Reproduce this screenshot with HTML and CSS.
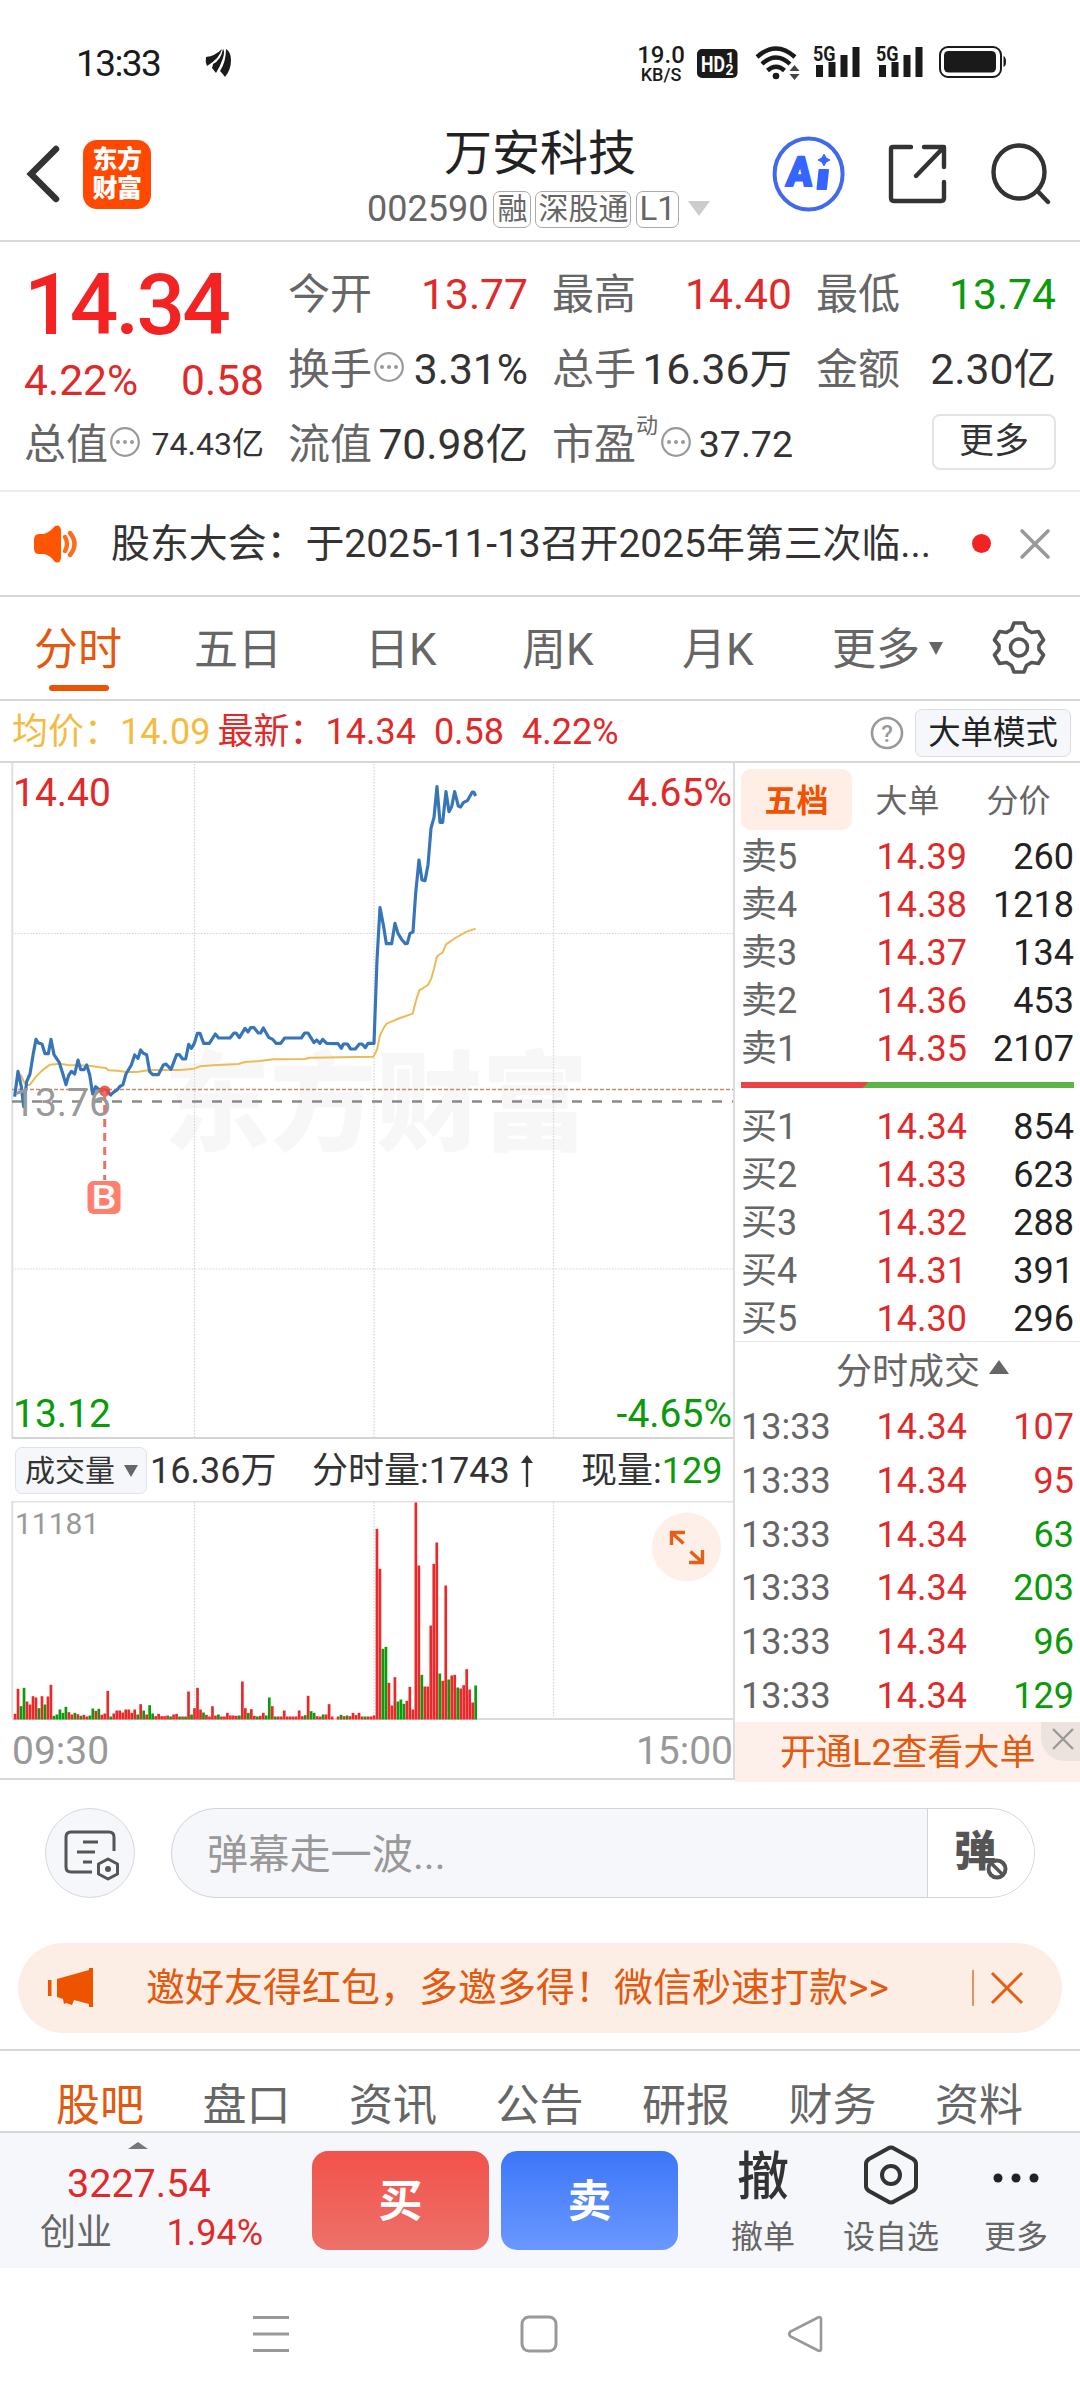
FILE: index.html
```html
<!DOCTYPE html>
<html lang="zh-CN">
<head>
<meta charset="utf-8">
<title>万安科技 002590</title>
<link rel="stylesheet" href="styles.css">
</head>
<body>
<div class="status">
  <span class="clock">13:33</span>
  <svg class="feather" width="28" height="30" viewBox="0 0 28 30"><path d="M1 9Q10 8 17 1Q15 10 2 18Q0 14 1 9ZM18 1Q20 3 18 10Q15 19 11 25L7 20Q8 17 8 16Q16 12 18 1ZM21 1Q26 4 26 12Q26 22 20 29Q18 26 15 23Q21 14 21 1Z" fill="#1a1a1a"/></svg>
  <span class="speed"><b>19.0</b><i>KB/S</i></span>
  <svg class="hd" width="41" height="30" viewBox="0 0 41 30"><rect width="40.500" height="29" rx="5" fill="#1a1a1a"/><text x="4" y="23" class="hd-t" textLength="24" lengthAdjust="spacingAndGlyphs">HD</text><text x="29" y="13.500" class="hd-n">1</text><text x="28.500" y="25.500" class="hd-n">2</text></svg>
  <svg class="wifi" width="46" height="36" viewBox="0 0 46 36"><g fill="none" stroke="#1a1a1a" stroke-width="4.400"><path d="M2 12Q21 -5 40 12"/><path d="M7 19Q21 6 35 19"/><path d="M12.500 25.500Q21 18 29.500 25.500"/></g><circle cx="21" cy="31" r="3.300" fill="#1a1a1a"/><path d="M34.500 26h10l-5-6zM34.500 29h10l-5 6z" fill="#444"/></svg>
  <svg class="signal" width="47" height="34" viewBox="0 0 47 34"><text x="0" y="17" class="g5" textLength="22.500" lengthAdjust="spacingAndGlyphs">5G</text><path d="M3 21h7v12H3zM15.500 18h7v15h-7zM27.500 11h7v22h-7zM39.500 3h7v30h-7z" fill="#1a1a1a"/></svg>
  <svg class="signal two" width="47" height="34" viewBox="0 0 47 34"><text x="0" y="17" class="g5" textLength="22.500" lengthAdjust="spacingAndGlyphs">5G</text><path d="M3 21h7v12H3zM15.500 18h7v15h-7zM27.500 11h7v22h-7zM39.500 3h7v30h-7z" fill="#1a1a1a"/></svg>
  <svg class="battery" width="68" height="34" viewBox="0 0 68 34"><rect x="1" y="2" width="61" height="30" rx="8" fill="none" stroke="#1a1a1a" stroke-width="2"/><rect x="5" y="6" width="52" height="21.500" rx="4.500" fill="#1a1a1a"/><path d="M64.500 11q2.500 1 2.500 5.500t-2.500 5.500z" fill="#1a1a1a"/></svg>
</div>

<header class="head">
  <svg class="back" width="36" height="60" viewBox="0 0 36 60"><path d="M32 5L7 30L32 55" fill="none" stroke="#333" stroke-width="6.500" stroke-linecap="round" stroke-linejoin="miter"/></svg>
  <div class="logo"><span>东方</span><span>财富</span></div>
  <div class="title">
    <h1>万安科技</h1>
    <div class="code"><span>002590</span><em>融</em><em>深股通</em><em>L1</em><i class="tri"></i></div>
  </div>
  <svg class="ai" width="74" height="76" viewBox="0 0 74 76"><ellipse cx="36.600" cy="38" rx="34" ry="35.500" fill="none" stroke="#4169ee" stroke-width="4"/><text x="18" y="50.500" transform="skewX(-5)" class="ai-t" textLength="26" lengthAdjust="spacingAndGlyphs">A</text><path d="M47.500 34h8.500l-2 19h-8.500z" fill="#3564ff" stroke="#3564ff" stroke-width="2" stroke-linejoin="round"/><path d="M52 18l2 4 4 2-4 2-2 4-2-4-4-2 4-2z" fill="#3564ff" stroke="#3564ff"/></svg>
  <svg class="share" width="60" height="60" viewBox="0 0 60 60"><g fill="none" stroke="#333" stroke-width="4.400" stroke-linecap="round" stroke-linejoin="round"><path d="M23 3H5Q3 3 3 5V54Q3 57 6 57H53Q56 57 56 54V38"/><path d="M36 3H56V23M55 4L28 32"/></g></svg>
  <svg class="search" width="62" height="62" viewBox="0 0 62 62"><ellipse cx="29" cy="29" rx="25.500" ry="26.500" fill="none" stroke="#333" stroke-width="4.400"/><path d="M47 47.500L58 59" stroke="#333" stroke-width="4.400" stroke-linecap="round"/></svg>
</header>

<section class="quote">
  <div class="col main">
    <div class="price">14.34</div>
    <div class="cell chg"><span>4.22%</span><span>0.58</span></div>
    <div class="cell"><label>总值</label><svg class="info" viewBox="0 0 32 32"><circle cx="16" cy="16" r="13.800"/><path d="M9 16h0M16 16h0M23 16h0"/></svg><span class="s32">74.43亿</span></div>
  </div>
  <div class="col">
    <div class="cell"><label>今开</label><span class="red">13.77</span></div>
    <div class="cell"><label>换手</label><svg class="info" viewBox="0 0 32 32"><circle cx="16" cy="16" r="13.800"/><path d="M9 16h0M16 16h0M23 16h0"/></svg><span>3.31%</span></div>
    <div class="cell"><label>流值</label><span>70.98亿</span></div>
  </div>
  <div class="col">
    <div class="cell"><label>最高</label><span class="red">14.40</span></div>
    <div class="cell"><label>总手</label><span>16.36万</span></div>
    <div class="cell"><label>市盈</label><sup>动</sup><svg class="info" viewBox="0 0 32 32"><circle cx="16" cy="16" r="13.800"/><path d="M9 16h0M16 16h0M23 16h0"/></svg><span class="s38">37.72</span></div>
  </div>
  <div class="col">
    <div class="cell"><label>最低</label><span class="green">13.74</span></div>
    <div class="cell"><label>金额</label><span>2.30亿</span></div>
    <div class="cell"><button class="more">更多</button></div>
  </div>
</section>

<section class="news">
  <svg width="46" height="40" viewBox="0 0 46 40"><path d="M6 10H11Q17 8 22 2Q27 0 28 6V34Q27 40 22 38Q17 31 11 30H6Q1 30 1 24V16Q1 10 6 10Z" fill="#ff5400"/><g fill="none" stroke="#ff6a1c" stroke-width="4.400" stroke-linecap="round"><path d="M32 13Q36 20 32 27"/><path d="M37 9Q46 20 37 31"/></g></svg>
  <p>股东大会：于2025-11-13召开2025年第三次临...</p>
  <i class="dot"></i>
  <svg class="x" width="32" height="32" viewBox="0 0 32 32"><path d="M3 3L29 29M29 3L3 29" stroke="#999" stroke-width="3.600" stroke-linecap="round"/></svg>
</section>

<nav class="periods">
  <a class="on">分时</a><a>五日</a><a>日K</a><a>周K</a><a>月K</a><a class="pm">更多<i></i></a>
  <svg width="54" height="54" viewBox="0 0 54 54"><g fill="none" stroke="#555" stroke-width="3.600" stroke-linejoin="round"><path d="M22 3h10l2.500 6.500 5 3 7-1 5 8.500-4.500 5.500v4l4.500 5.500-5 8.500-7-1-5 3L32 52H22l-2.500-6.500-5-3-7 1-5-8.500L7 29.500v-4L2.500 20l5-8.500 7 1 5-3z"/><circle cx="27" cy="27.500" r="8.500"/></g></svg>
</nav>

<section class="avg">
  <span class="yellow">均价：14.09</span><span class="red">最新：14.34</span><span class="red">0.58</span><span class="red">4.22%</span>
  <svg width="34" height="34" viewBox="0 0 34 34"><circle cx="17" cy="17" r="15" fill="none" stroke="#999" stroke-width="2.600"/><text x="17" y="25.500" text-anchor="middle" class="q">?</text></svg>
  <button>大单模式</button>
</section>

<main class="board">
  <div class="left">
    <svg class="chart" width="733" height="676" viewBox="0 0 733 676">
      <text class="wm" x="164" y="379" textLength="424" lengthAdjust="spacingAndGlyphs">东方财富</text>
      <g class="grid"><path d="M194.500 1V675M374 1V675M553.500 1V675M12 170.500H733M12 506H733"/></g>
      <path d="M12.300 0V675" stroke="#e0e0e0" stroke-width="2"/>
      <path d="M12 675H733" stroke="#d4d4d4" stroke-width="2"/>
      <path d="M12 326.500H733" stroke="#c88a68" stroke-width="1.400" stroke-dasharray="4 2"/>
      <path d="M12 338.500H733" stroke="#8a8a8a" stroke-width="2.600" stroke-dasharray="10 10"/>
      <g transform="translate(0 -3) scale(.33333)" fill="none" stroke-linejoin="round">
        <path stroke="#edbb55" stroke-width="6" d="M46 1000L54 938L64 948L72 966L80 976L90 974L108 950L126 932L150 914L178 911L205 915L235 916L268 917L300 922L318 924L325 931L352 932L380 936L410 936L450 930L540 930L565 928L582 926L600 919L640 916L715 912L735 906L780 903L820 898L915 897L930 893L1120 890L1126 880L1132 865L1140 826L1152 802L1160 791L1200 774L1238 761L1242 745L1250 715L1258 691L1284 675L1294 655L1302 626L1310 592L1316 585L1328 578L1338 553L1366 534L1400 515L1427 506"/>
        <path stroke="#3775b9" stroke-width="9.500" d="M44 1010L54 934L64 980L71 1040L80 965L90 942L100 880L108 838L115 849L126 852L135 881L145 881L153 838L162 884L178 908L188 940L198 974L206 946L214 934L224 942L234 900L242 929L252 929L260 915L269 944L278 1002L287 980L298 990L310 990L320 992L332 1005L340 997L352 989L359 980L369 974L378 942L394 915L404 885L414 895L422 870L430 880L440 884L449 935L458 944L475 944L490 915L498 912L513 928L530 884L538 884L548 897L557 897L566 853L574 865L583 850L592 820L600 820L611 850L628 850L646 822L656 834L690 834L702 819L708 819L718 833L735 805L744 816L752 803L762 803L775 819L782 819L790 804L806 832L818 838L828 850L842 850L854 834L904 834L914 819L924 819L942 848L950 840L960 850L968 838L980 850L1014 851L1024 865L1030 852L1042 852L1052 867L1066 867L1078 852L1086 852L1096 863L1104 850L1122 850L1131 600L1140 443L1151 500L1159 551L1175 551L1185 490L1194 520L1206 540L1216 551L1222 550L1230 520L1239 516L1247 400L1257 300L1266 360L1275 362L1284 315L1293 205L1302 172L1311 80L1320 187L1328 187L1338 95L1347 155L1355 140L1364 95L1375 138L1382 141L1390 128L1402 122L1417 96L1422 97L1427 108"/>
      </g>
      <text class="lab red" x="13" y="43">14.40</text>
      <text class="lab red" x="732" y="43" text-anchor="end">4.65%</text>
      <text class="lab grey" x="13" y="353">13.76</text>
      <text class="lab green" x="13" y="664">13.12</text>
      <text class="lab green" x="732" y="664" text-anchor="end">-4.65%</text>
      <circle cx="104.700" cy="328" r="5.600" fill="#ee4337" fill-opacity=".85"/>
      <path d="M104.700 328V417" stroke="#e87365" stroke-width="3" stroke-dasharray="8 6"/>
      <rect x="87.500" y="418" width="33" height="33" rx="6" fill="#fe7f6d"/>
      <text class="b" x="104" y="446" text-anchor="middle" textLength="25" lengthAdjust="spacingAndGlyphs">B</text>
    </svg>
    <div class="volhead">
      <button>成交量<i></i></button><span class="v1">16.36万</span><span class="v2">分时量:1743</span>
      <svg width="14" height="34" viewBox="0 0 14 34"><path d="M7 4V33" stroke="#333" stroke-width="2.400"/><path d="M1 9L7 1L13 9Z" fill="#333"/></svg>
      <span class="v3">现量:<b>129</b></span>
    </div>
    <svg class="vol" width="733" height="220" viewBox="0 0 733 220">
      <path d="M12 .8H733" stroke="#e2e2e2" stroke-width="1.600"/><path d="M12.300 0V218" stroke="#e0e0e0" stroke-width="2"/><path d="M12 218H733" stroke="#dcdcdc" stroke-width="2"/>
      <g class="grid"><path d="M194.500 1V217M374 1V217M553.500 1V217"/></g>
      <g id="bars"></g>
      <text class="max" x="15" y="33">11181</text>
      <circle cx="686.600" cy="46" r="34.500" fill="#fef0e8"/>
      <g fill="none" stroke="#e2601c" stroke-width="3.400"><path d="M671.500 44V31.500H685M672 32L683.500 42.500M702.500 49V61.500H689M702 61L690.500 50.500"/></g>
    </svg>
    <div class="times"><span>09:30</span><span>15:00</span></div>
  </div>
  <aside class="right">
    <div class="rtabs"><a class="on">五档</a><a>大单</a><a>分价</a></div>
    <div class="rows">
      <div><span>卖5</span><span>14.39</span><span>260</span></div>
      <div><span>卖4</span><span>14.38</span><span>1218</span></div>
      <div><span>卖3</span><span>14.37</span><span>134</span></div>
      <div><span>卖2</span><span>14.36</span><span>453</span></div>
      <div><span>卖1</span><span>14.35</span><span>2107</span></div>
    </div>
    <div class="ratio"></div>
    <div class="rows">
      <div><span>买1</span><span>14.34</span><span>854</span></div>
      <div><span>买2</span><span>14.33</span><span>623</span></div>
      <div><span>买3</span><span>14.32</span><span>288</span></div>
      <div><span>买4</span><span>14.31</span><span>391</span></div>
      <div><span>买5</span><span>14.30</span><span>296</span></div>
    </div>
    <div class="dealhead">分时成交<i></i></div>
    <div class="rows deals">
      <div><span>13:33</span><span>14.34</span><span class="red">107</span></div>
      <div><span>13:33</span><span>14.34</span><span class="red">95</span></div>
      <div><span>13:33</span><span>14.34</span><span class="green">63</span></div>
      <div><span>13:33</span><span>14.34</span><span class="green">203</span></div>
      <div><span>13:33</span><span>14.34</span><span class="green">96</span></div>
      <div><span>13:33</span><span>14.34</span><span class="green">129</span></div>
    </div>
    <div class="l2">开通L2查看大单<i class="close"><svg width="22" height="22" viewBox="0 0 22 22"><path d="M1 1L21 21M21 1L1 21" stroke="#999" stroke-width="2.400"/></svg></i></div>
  </aside>
</main>

<section class="comment">
  <div class="round"><svg width="58" height="56" viewBox="0 0 58 56"><g fill="none" stroke="#555" stroke-width="3"><path d="M51 23V9Q51 4 46 4H8Q3 4 3 9V39Q3 44 8 44H29"/><path d="M20 14H35M14 24H32M20 34H29" /><path d="M45 31L54.500 36V46L45 51L35.500 46V36Z" stroke-linejoin="round"/></g><circle cx="45" cy="41" r="3" fill="#555"/></svg></div>
  <div class="field"><span>弹幕走一波...</span><div class="dan">弹<svg width="24" height="24" viewBox="0 0 24 24"><circle cx="12" cy="12" r="8.500" fill="#fff" stroke="#555" stroke-width="4"/><path d="M7 7L17 17" stroke="#555" stroke-width="3.400"/></svg></div></div>
</section>

<section class="promo">
  <svg width="46" height="40" viewBox="0 0 46 40"><path d="M0 12H3.500V28H0ZM9 11L41 2V0H45V39H41V36L26 32L24 37L18 35L16 36L15 31L9 29Z" fill="#ee5400"/></svg>
  <p>邀好友得红包，多邀多得！微信秒速打款&gt;&gt;</p>
  <i></i>
  <svg class="px" width="34" height="34" viewBox="0 0 34 34"><path d="M2 2L32 32M32 2L2 32" stroke="#ea5a10" stroke-width="3"/></svg>
</section>

<nav class="tabs"><a class="on">股吧</a><a>盘口</a><a>资讯</a><a>公告</a><a>研报</a><a>财务</a><a>资料</a></nav>

<footer class="bar">
  <div class="index"><i></i><strong>3227.54</strong><div><span>创业</span><span class="red">1.94%</span></div></div>
  <button class="buy">买</button><button class="sell">卖</button>
  <div class="act a1"><b>撤</b><span>撤单</span></div>
  <div class="act a2"><svg width="58" height="60" viewBox="0 0 58 60"><path d="M26 3.500Q29 1.500 32 3.500L51 14Q54 16 54 19V41Q54 44 51 46L32 56.500Q29 58.500 26 56.500L7 46Q4 44 4 41V19Q4 16 7 14Z" fill="none" stroke="#333" stroke-width="4"/><circle cx="29" cy="30" r="9" fill="none" stroke="#333" stroke-width="4"/></svg><span>设自选</span></div>
  <div class="act a3"><svg width="58" height="60" viewBox="0 0 58 60"><g fill="#222"><circle cx="11" cy="33" r="4.500"/><circle cx="29" cy="33" r="4.500"/><circle cx="47" cy="33" r="4.500"/></g></svg><span>更多</span></div>
</footer>

<div class="sys">
  <svg width="40" height="40" viewBox="0 0 40 40"><path d="M2 3.500H38M2 20H38M2 36.500H38" stroke="#999" stroke-width="3"/></svg>
  <svg width="40" height="40" viewBox="0 0 40 40"><rect x="3" y="3" width="34" height="34" rx="7" fill="none" stroke="#999" stroke-width="3"/></svg>
  <svg width="40" height="40" viewBox="0 0 40 40"><path d="M36 4.500V35.500Q35.500 37.500 33 36.500L5.500 22.500Q3 20 5.500 17.500L33 3.500Q35.500 2.500 36 4.500Z" fill="none" stroke="#999" stroke-width="2.600"/></svg>
</div>
<script src="bars.js"></script>
</body>
</html>
```
FILE: styles.css
```css
* { box-sizing: border-box; }
body { margin: 0; width: 1080px; height: 2400px; overflow: hidden; background: #fff; color: #333; font-family: Roboto, "Noto Sans CJK SC", sans-serif; font-size: 36px; }
i, em { font-style: normal; }
button { font-family: inherit; color: inherit; padding: 0; margin: 0; }
svg { display: block; flex: none; }
p, h1 { margin: 0; font-weight: 400; }
.red { color: #e02a2a; }
.green { color: #0a9a0a; }
.yellow { color: #f3bb41; }

.status { height: 100px; padding: 44px 0 0 76px; display: flex; align-items: flex-start; color: #1a1a1a; }
.clock { width: 129px; font-size: 37px; line-height: 40px; letter-spacing: -1.6px; }
.feather { margin-top: 4px; }
.speed { width: 48px; height: 42px; margin-left: 404px; display: flex; flex-direction: column; align-items: center; }
.speed b { font-size: 24px; line-height: 22px; font-weight: 500; }
.speed i { font-size: 18px; line-height: 17px; font-weight: 500; }
.hd { margin: 5px 0 0 12px; }
.hd-t { font: 700 22px Roboto, sans-serif; fill: #fff; }
.hd-n { font: 700 14px Roboto, sans-serif; fill: #fff; }
.wifi { margin: 1px 0 0 17px; }
.signal { margin: 0 0 0 12px; }
.signal.two { margin-left: 16px; }
.g5 { font: 700 20px Roboto, sans-serif; fill: #1a1a1a; }
.battery { margin: 1px 0 0 16px; }

.head { height: 142px; border-bottom: 2px solid #d8d8d8; display: flex; align-items: flex-start; }
.back { margin: 44px 0 0 24px; }
.logo { width: 68px; height: 69px; margin: 40px 0 0 23px; padding-top: 5px; border-radius: 14px; background: #ff4800; color: #fff; font-weight: 900; font-size: 25px; line-height: 29px; text-align: center; display: flex; flex-direction: column; letter-spacing: -.5px; }
.title { width: 350px; margin: 21px 0 0 214px; }
.title h1 { padding-left: 79px; font-size: 48px; line-height: 66px; color: #222; }
.code { display: flex; align-items: center; height: 38px; margin-top: 3px; color: #666; line-height: 38px; font-size: 36px; padding-left: 2px; white-space: nowrap; }
.code em { height: 37px; line-height: 33px; font-size: 30px; border: 1.5px solid #aaa; border-radius: 7px; padding: 0 3px; margin-left: 5px; }
.code em:nth-of-type(2) { margin-left: 4px; padding: 0 2px; }
.code em:nth-of-type(3) { padding: 0 2px; font-size: 33px; }
.tri { margin: -1px 0 0 9px; border: 11px solid transparent; border-top: 15px solid #ccc; border-bottom: 0; }
.ai { margin: 36px 0 0 57px; }
.ai-t { font: 900 41px Roboto, sans-serif; fill: #3564ff; stroke: #3564ff; stroke-width: 2; stroke-linejoin: round; }
.share { margin: 44px 0 0 42px; }
.search { margin: 43px 0 0 42px; }

.quote { height: 250px; padding: 15px 24px 0; display: grid; grid-template-columns: repeat(4, 240px); column-gap: 24px; border-bottom: 2px solid #ececec; }
.cell { height: 75px; display: flex; align-items: center; font-size: 42px; line-height: 75px; white-space: nowrap; }
.cell label { color: #666; }
.cell span { margin-left: auto; font-size: 42.6px; }
.price { height: 97px; line-height: 97px; font-size: 85.5px; font-weight: 500; color: #f32323; letter-spacing: -2.8px; }
.chg { color: #e02a2a; }
.cell.chg span:first-child { margin-left: 0; }
.main .chg { height: 53px; line-height: 53px; }
.cell .s32 { font-size: 32px; }
.cell .s38 { font-size: 37.5px; margin-right: -1px; }
.info { width: 32px; height: 32px; margin: -6px 0 0 1px; fill: none; stroke: #999; stroke-width: 2.2; stroke-linecap: round; }
.info path { stroke-width: 4; }
.cell sup { font-size: 22px; line-height: 24px; color: #666; margin: -38px 1px 0 0; }
.more { width: 124px; height: 56px; margin: -6px 0 0 auto; border: 2px solid #e4e4e4; border-radius: 8px; background: #fff; font-size: 35px; line-height: 50px; }

.news { height: 105px; padding: 0 29px 0 33px; display: flex; align-items: center; border-bottom: 2px solid #d8d8d8; }
.news p { width: 858px; margin-left: 32px; font-size: 38.9px; line-height: 60px; white-space: nowrap; }
.dot { width: 19px; height: 19px; border-radius: 50%; background: #f32323; margin-left: 3px; }
.news .x { margin-left: auto; }

.periods { height: 104px; display: flex; align-items: center; border-bottom: 2px solid #d8d8d8; font-size: 44px; line-height: 102px; color: #666; padding: 4px 0 0 34px; }
.periods a { width: 162px; white-space: nowrap; }
.periods a:nth-child(3) { width: 157px; margin-left: 9px; }
.periods a:nth-child(4) { width: 160px; }
.periods a:nth-child(5) { width: 150px; }
.periods a.on { color: #e2590f; position: relative; width: 160px; }
.periods a.on::after { content: ""; position: absolute; left: 15px; bottom: 10px; width: 60px; height: 6px; border-radius: 3px; background: #ea5504; }
.periods .pm { display: flex; align-items: center; width: 160px; }
.pm i { margin: 0 0 4px 9px; border: 7.5px solid transparent; border-top: 13px solid #666; border-bottom: 0; }
.periods svg { margin: 0 0 6px 0; }

.avg { height: 62px; display: flex; align-items: center; border-bottom: 2px solid #d8d8d8; padding: 3px 9px 0 12px; line-height: 57px; white-space: nowrap; }
.avg span { margin-right: 18px; }
.avg .yellow { margin-right: 7px; }
.avg svg { margin-left: auto; }
.q { font: 500 24px Roboto, sans-serif; fill: #999; }
.avg button { width: 156px; height: 48px; margin-left: 11px; border: 1.5px solid #dcdee2; border-radius: 7px; background: #f6f7fa; color: #222; font-size: 32.4px; line-height: 46px; white-space: nowrap; }

.board { height: 1017px; display: flex; border-bottom: 2px solid #d8d8d8; }
.left { width: 733px; flex: none; }
.chart text, .vol text { font-family: Roboto, "Noto Sans CJK SC", sans-serif; }
.lab { font-size: 39px; }
text.red { fill: #e02a2a; }
text.green { fill: #0a9a0a; }
text.grey { fill: #999; }
.wm { font-size: 108px; font-weight: 900; fill: #f7f7f7; }
.b { font-size: 34px; font-weight: 500; fill: #fff; }
.grid path { fill: none; stroke: #d4d4d4; stroke-width: 1.2; stroke-dasharray: 1.5 1.5; }
.volhead { height: 62px; display: flex; align-items: center; padding: 1px 0 0 15px; line-height: 60px; }
.volhead button { width: 132px; height: 47px; display: flex; align-items: center; border: 1.5px solid #dfe2e6; border-radius: 7px; background: #f6f7fa; font-size: 30px; line-height: 44px; padding-left: 9px; white-space: nowrap; }
.volhead i { margin-left: 9px; border: 7px solid transparent; border-top: 12px solid #666; border-bottom: 0; }
.v1 { margin-left: 3px; width: 162px; }
.v2 { width: 208px; white-space: nowrap; }
.v3 { margin-left: 47px; }
.v3 b { font-weight: 400; color: #0a9a0a; }
.max { font-size: 30px; fill: #999; }
.times { height: 58px; padding: 2px 0 0 12px; display: flex; justify-content: space-between; font-size: 39px; line-height: 56px; color: #999; }

.right { width: 347px; border-left: 2px solid #dcdcdc; }
.rtabs { height: 69px; padding: 6px 0 0 6px; display: flex; font-size: 32px; line-height: 64px; color: #666; }
.rtabs a { width: 111px; height: 61px; flex: none; text-align: center; }
.rtabs .on { background: #ffeee6; border-radius: 10px; color: #f25100; font-weight: 700; }
.rows { padding: 1px 6px 0 6px; color: #222; }
.rows div { height: 48px; line-height: 48px; display: grid; grid-template-columns: 113px 113px 1fr; white-space: nowrap; }
.rows span:first-child { color: #666; }
.rows span:nth-child(2) { color: #e02a2a; text-align: right; }
.rows span:nth-child(3) { text-align: right; }
.ratio { height: 6px; margin: 9px 6px 14px 6px; background: linear-gradient(135deg, #e94344 90px, #5cb546 90.5px); }
.dealhead { height: 57px; display: flex; align-items: center; padding: 3px 0 0 101px; margin-top: -2px; border-top: 1.5px solid #e4e4e4; line-height: 54px; color: #666; }
.dealhead i { margin: 0 0 9px 9px; border: 10.5px solid transparent; border-bottom: 14px solid #666; border-top: 0; }
.deals div { height: 53.8px; line-height: 56px; }
.l2 { height: 60px; position: relative; background: #fdf0ea; color: #e2590f; line-height: 63px; padding-left: 45px; white-space: nowrap; }
.close { position: absolute; right: 0; top: 0; width: 39px; height: 39px; border-radius: 0 0 0 24px; background: #ece3de; padding: 6px 0 0 11px; }

.comment { height: 147px; padding: 28px 45px 0; display: flex; }
.round { width: 90px; height: 90px; border: 1.5px solid #d6d8dd; border-radius: 50%; background: #f6f7fa; padding: 19px 0 0 17px; }
.field { width: 864px; height: 90px; margin-left: 36px; border: 1.5px solid #d0d3d8; border-radius: 45px; background: #f6f7fa; overflow: hidden; display: flex; justify-content: space-between; padding-left: 35px; font-size: 41.2px; line-height: 92px; color: #999; }
.dan { width: 107px; background: #fff; border-left: 1.5px solid #d0d3d8; color: #555; font-weight: 900; font-size: 42px; line-height: 86px; padding-left: 26px; display: flex; }
.dan svg { margin: 48px 0 0 -11px; }
.promo { height: 90px; margin: 16px 18px; border-radius: 45px; background: #fceee5; display: flex; align-items: center; padding: 0 38px 0 30px; color: #e2590f; }
.promo p { margin-left: 52px; font-size: 39px; line-height: 86px; white-space: nowrap; }
.promo i { width: 2px; height: 36px; background: #e88f60; margin-left: auto; }
.px { margin-left: 16px; }

.tabs { height: 84px; border-top: 2px solid #d8d8d8; border-bottom: 2px solid #d4d6da; padding-left: 56px; display: flex; font-size: 44px; line-height: 110px; color: #666; overflow: hidden; }
.tabs a { width: 146.5px; flex: none; white-space: nowrap; }
.tabs .on { color: #e2590f; }

.bar { height: 135px; background: #f6f7fa; display: flex; align-items: flex-start; }
.index { width: 312px; display: flex; flex-direction: column; padding-left: 40px; }
.index i { align-self: flex-start; margin: 9px 0 0 88px; border: 10.5px solid transparent; border-bottom: 7px solid #777; border-top: 0; }
.index strong { font-weight: 400; font-size: 39.5px; line-height: 44px; color: #e02a2a; margin: 13px 0 0 27px; }
.index div { display: flex; justify-content: space-between; width: 223px; line-height: 54px; color: #666; }
.index .red { color: #e02a2a; }
.buy, .sell { width: 177px; height: 99px; margin-top: 18px; border: 0; border-radius: 16px; color: #fff; font-weight: 700; font-size: 44px; line-height: 103px; background: linear-gradient(#f2524a, #ed716a); }
.sell { margin-left: 12px; background: linear-gradient(#3c76f8, #6b98ff); }
.act { display: flex; flex-direction: column; align-items: center; width: 110px; font-size: 32px; color: #666; line-height: 44px; padding-top: 12px; }
.act b { font-size: 52px; height: 60px; line-height: 66px; font-weight: 500; color: #333; }
.act span { margin-top: 10px; white-space: nowrap; }
.a1 { margin-left: 30px; }
.a2 { margin-left: 18px; }
.a3 { margin-left: 15px; }

.sys { display: flex; padding: 46px 0 0 251px; }
.sys svg + svg { margin-left: 228px; }
.sys svg + svg + svg { margin-left: 226px; }
```
FILE: bars.js
```js
// Minute volumes in bar units; a minus sign marks a falling minute.
const volumes = [
  17, 92, -40, -95, 54, 45, 70, 66, -34, 70, -45, 69, 104, -11, -15, -30, -20, -38, 22, 15,
  -20, 16, -11, 14, 9, -12, -33, 26, -32, 14, 18, 86, -9, 18, 27, 27, 21, 30, 30, 20,
  30, -15, 46, -27, 15, -43, -18, 10, 17, 10, 10, 12, -9, 15, 17, -9, 9, -9, 84, -15,
  34, 95, 30, -21, 14, 9, 40, 12, -15, 9, 9, 20, 12, 12, 11, -12, 114, 34, -20, 31,
  11, -9, 11, 20, -12, -66, 40, -9, 9, 9, 27, 9, 9, 9, 9, 27, 10, -13, 71, -25,
  -20, 10, 9, -15, 15, 46, 9, 0, 9, -14, 10, -12, 10, 20, 13, 20, 9, -9, 9, 9,
  12, 572, 452, -212, -218, 110, 42, 127, -54, -60, -47, 56, 98, 30, 651, 462, -134, 99, 99, 282,
  467, 531, -138, 116, 402, -120, 132, 134, -96, 93, 103, 151, 90, 51, -102
];
const group = document.getElementById('bars');
volumes.forEach((v, i) => {
  const h = Math.abs(v) / 3;
  const r = document.createElementNS('http://www.w3.org/2000/svg', 'rect');
  r.setAttribute('x', (13.7 + i * 2.991).toFixed(2));
  r.setAttribute('y', (218.5 - h).toFixed(2));
  r.setAttribute('width', 2.7);
  r.setAttribute('height', h.toFixed(2));
  r.setAttribute('fill', v < 0 ? '#0d9a0d' : '#ea2a2a');
  group.appendChild(r);
});
```
